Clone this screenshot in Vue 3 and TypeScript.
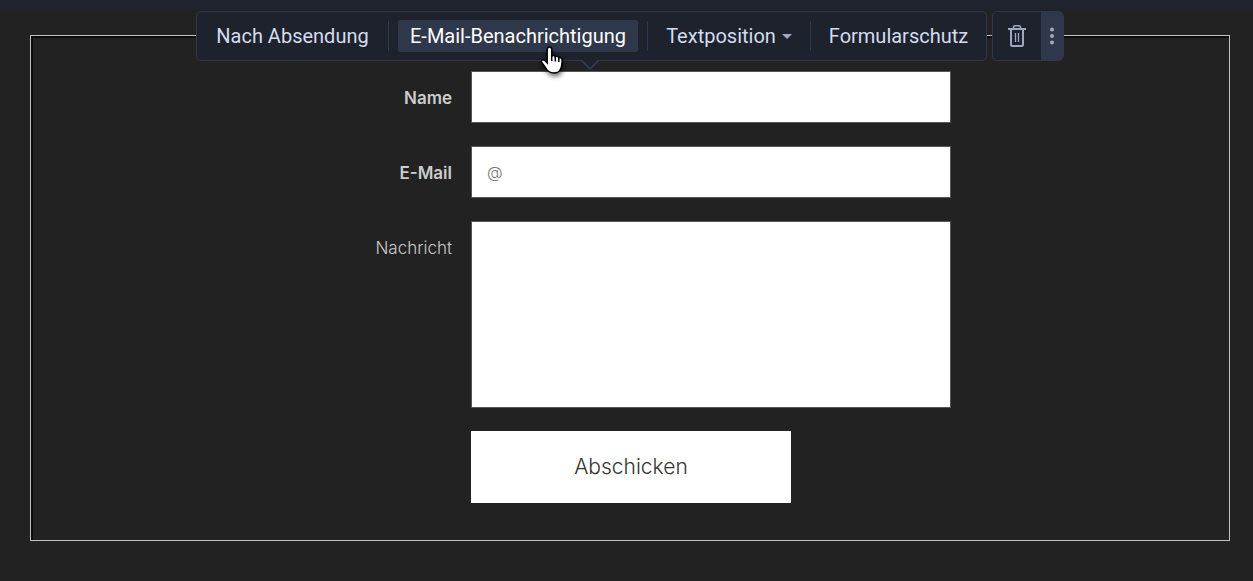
<script setup lang="ts">
import { ref } from 'vue'

interface ToolbarItem {
  id: string
  label: string
  menu?: boolean
}

const items: ToolbarItem[] = [
  { id: 'after', label: 'Nach Absendung' },
  { id: 'notify', label: 'E-Mail-Benachrichtigung' },
  { id: 'position', label: 'Textposition', menu: true },
  { id: 'protect', label: 'Formularschutz' },
]

const active = ref('notify')
const name = ref('')
const email = ref('')
const message = ref('')
</script>

<template>
  <div class="page">
    <header class="topbar"></header>
    <main class="canvas">
      <section class="frame">
        <div class="tools">
          <div class="toolbar" role="toolbar" aria-label="Formular">
            <div v-for="item in items" :key="item.id" class="cell" :class="item.id">
              <button type="button" class="tool" :class="{ active: active === item.id }" @click="active = item.id">
                {{ item.label }}
                <svg v-if="item.menu" class="caret" viewBox="0 0 10 5"><path d="M0 0h10L5 5z" /></svg>
              </button>
            </div>
            <svg class="pointer" viewBox="0 0 20 10"><path d="M1 0l9 9 9-9" /></svg>
            <svg class="hand" viewBox="0 0 28 34">
              <path
                d="M9.5 2c1.5 0 2.2 1 2.2 2.4v7c.6-1.4 3.2-1.3 3.6.5.8-1.100 3.200-.7 3.500 1 1.100-.9 3.300-.2 3.300 1.800 0 4.200-.1 6.500-1.500 9.300-.9 2.300-2.300 4-6.600 4-4.600 0-6.300-1.500-8.300-5L1.600 17.300c-.9-1.700 1.200-3.200 2.900-2l2.700 2.700V4.400C7.200 3 8 2 9.500 2z"
              />
              <path class="fingers" d="M11.700 11v5M15.300 12v4.500M18.800 13v4" />
            </svg>
          </div>
          <div class="toolbar actions">
            <button type="button" class="delete" aria-label="Löschen">
              <svg viewBox="0 0 18 22">
                <path d="M3 4v15.500q0 1.500 1.500 1.500h9q1.500 0 1.500-1.500V4" />
                <path d="M0 4h18" />
                <path class="lid" d="M5.500 3.500V2.200q0-1.400 1.400-1.400h4.200q1.400 0 1.400 1.400v1.300" />
                <path class="thin" d="M7.500 8v9M10.500 8v9" />
              </svg>
            </button>
            <button type="button" class="more" aria-label="Mehr">
              <svg viewBox="0 0 4 18">
                <circle cx="2" cy="2.500" r="2" /><circle cx="2" cy="9" r="2" /><circle cx="2" cy="15.500" r="2" />
              </svg>
            </button>
          </div>
        </div>
        <form class="form" @submit.prevent>
          <label class="required" for="name">Name</label>
          <input id="name" v-model="name" type="text" />
          <label class="required" for="email">E-Mail</label>
          <input id="email" v-model="email" type="text" placeholder="@" />
          <label for="message">Nachricht</label>
          <textarea id="message" v-model="message"></textarea>
          <button type="submit" class="submit">Abschicken</button>
        </form>
      </section>
    </main>
  </div>
</template>

<style>
body {
  margin: 0;
  background: #222;
}
</style>

<style scoped>
.page {
  min-height: 100vh;
  box-sizing: border-box;
  background: #222;
  font-family: Inter, "Liberation Sans", sans-serif;
}
.topbar {
  height: 10px;
  background: #1e232e;
}
.canvas {
  padding: 25px 23px 40px 30px;
}
.frame {
  position: relative;
  border: 1px solid #c0c0c0;
  box-shadow: inset 1px 1px 0 1px #0c0c0c;
  padding: 35px 16px 37px 18px;
}
.tools {
  position: absolute;
  top: -25px;
  left: 0;
  right: 0;
  display: flex;
  justify-content: center;
  gap: 5px;
}
.toolbar {
  position: relative;
  display: flex;
  align-items: center;
  box-sizing: border-box;
  height: 50px;
  border: 1px solid #2f3850;
  border-radius: 5px;
  background: #1d222d;
}
.cell {
  display: flex;
  box-sizing: border-box;
  height: 30px;
  align-items: center;
  justify-content: center;
  border-left: 1px solid #2f3850;
}
.after {
  width: 191px;
  border-left: 0;
}
.notify {
  width: 259px;
}
.position {
  width: 163px;
}
.protect {
  width: 176px;
}
.tool {
  display: flex;
  align-items: center;
  justify-content: center;
  gap: 6px;
  height: 32px;
  padding: 0 9px;
  border: 0;
  border-radius: 2px;
  background: none;
  color: #d5dcef;
  font: 20px/32px Roboto, "Liberation Sans", sans-serif;
  white-space: nowrap;
}
.tool.active {
  width: 240px;
  background: #2f374b;
  color: #fff;
}
.caret {
  width: 10px;
  height: 5px;
  fill: #a0a8c0;
}
.pointer {
  position: absolute;
  top: 48px;
  left: 383px;
  width: 20px;
  height: 10px;
  fill: #1d222d;
  stroke: #2f3850;
  stroke-width: 2;
}
.hand {
  position: absolute;
  top: 33px;
  left: 343px;
  width: 28px;
  height: 34px;
  fill: #fff;
  stroke: #000;
  stroke-width: 1.5;
  filter: drop-shadow(1px 3px 2px rgba(0, 0, 0, 0.5));
}
.hand .fingers {
  fill: none;
}
.actions {
  align-items: stretch;
  overflow: hidden;
}
.delete,
.more {
  display: flex;
  align-items: center;
  justify-content: center;
  padding: 0;
  border: 0;
  background: none;
}
.delete {
  width: 48px;
}
.delete svg {
  width: 18px;
  height: 22px;
  fill: none;
  stroke: #a0a8c0;
  stroke-width: 2;
}
.delete .lid {
  stroke-width: 1.5;
}
.delete .thin {
  stroke-width: 1.3;
}
.more {
  width: 22px;
  background: #2f374b;
}
.more svg {
  width: 4px;
  height: 18px;
  fill: #a0a8c0;
}
.form {
  display: grid;
  grid-template-columns: 141px 1fr;
  gap: 23px 19px;
  max-width: 640px;
  margin: 0 auto;
}
label {
  color: #ccc;
  font-size: 17px;
  font-weight: 300;
  line-height: 54px;
  height: 52px;
  text-align: right;
}
.required {
  font-weight: 600;
}
input,
textarea {
  box-sizing: border-box;
  width: 100%;
  height: 52px;
  padding: 0 15px;
  border: 1px solid #555;
  border-radius: 0;
  background: #fff;
  color: #333;
  font: 300 16px Inter, sans-serif;
}
input::placeholder {
  color: #757575;
}
textarea {
  display: block;
  height: 187px;
  padding: 15px;
  resize: none;
}
.submit {
  grid-column: 2;
  width: 320px;
  height: 72px;
  padding: 0 0 2px;
  border: 0;
  background: #fff;
  color: #333;
  font: 300 21px Inter, sans-serif;
}
</style>
